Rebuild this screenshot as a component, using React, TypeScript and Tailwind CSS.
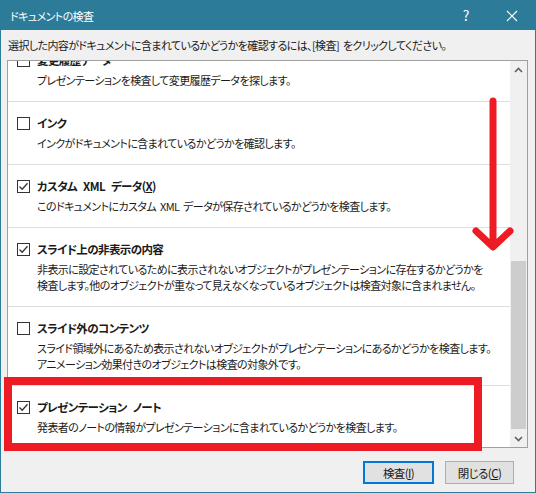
import React from 'react';

const FONT = "font-['Meiryo_UI','Noto_Sans_CJK_JP',sans-serif] [font-feature-settings:'palt'] [word-spacing:2px]";

type Item = { label: React.ReactNode; desc: string[]; checked: boolean };

const ITEMS: Item[] = [
  { label: '変更履歴データ', desc: ['プレゼンテーションを検査して変更履歴データを探します。'], checked: false },
  { label: 'インク', desc: ['インクがドキュメントに含まれているかどうかを確認します。'], checked: false },
  {
    label: (
      <>
        カスタム XML データ(<span className="underline">X</span>)
      </>
    ),
    desc: ['このドキュメントにカスタム XML データが保存されているかどうかを検査します。'],
    checked: true,
  },
  {
    label: 'スライド上の非表示の内容',
    desc: [
      '非表示に設定されているために表示されないオブジェクトがプレゼンテーションに存在するかどうかを',
      '検査します。他のオブジェクトが重なって見えなくなっているオブジェクトは検査対象に含まれません。',
    ],
    checked: true,
  },
  {
    label: 'スライド外のコンテンツ',
    desc: [
      'スライド領域外にあるため表示されないオブジェクトがプレゼンテーションにあるかどうかを検査します。',
      'アニメーション効果付きのオブジェクトは検査の対象外です。',
    ],
    checked: false,
  },
  { label: 'プレゼンテーション ノート', desc: ['発表者のノートの情報がプレゼンテーションに含まれているかどうかを検査します。'], checked: true },
];

function CheckBox({ checked }: { checked: boolean }) {
  return (
    <div className="w-[13px] h-[13px] border border-[#333333] bg-white flex items-center justify-center shrink-0">
      {checked && (
        <svg width="11" height="11" viewBox="0 0 11 11">
          <path d="M1.5 5.5 L4.2 8.2 L9.5 2.2" fill="none" stroke="#333333" strokeWidth="1.3" />
        </svg>
      )}
    </div>
  );
}

function Chevron({ up }: { up: boolean }) {
  return (
    <svg width="9" height="6" viewBox="0 0 9 6">
      <path d={up ? 'M1 5 L4.5 1.5 L8 5' : 'M1 1 L4.5 4.5 L8 1'} fill="none" stroke="#606060" strokeWidth="1.6" />
    </svg>
  );
}

export default function App() {
  return (
    <div className={`${FONT} relative w-[536px] h-[493px] border border-[#2b7b99] bg-[#f0f0f0] flex flex-col overflow-hidden text-[11px] tracking-[-0.6px] text-[#1a1a1a]`}>
      {/* Title bar */}
      <div className="h-[29px] bg-[#2b7b99] flex items-center pl-[9px] text-white shrink-0 text-[11px]">
        <span className="flex-1 leading-[16px]">ドキュメントの検査</span>
        <span className="w-[20px] text-center text-[14px] mr-[30px] tracking-normal">?</span>
        <svg width="12" height="12" viewBox="0 0 12 12" className="mr-[17px]">
          <path d="M1 1 L11 11 M11 1 L1 11" stroke="white" strokeWidth="1.2" />
        </svg>
      </div>

      {/* Instruction */}
      <div className="h-[30px] flex items-center pl-[7px] shrink-0 whitespace-nowrap">
        選択した内容がドキュメントに含まれているかどうかを確認するには、[検査] をクリックしてください。
      </div>

      {/* List panel */}
      <div className="ml-[6px] mr-[7px] h-[388px] border border-[#a0a0a0] bg-white flex shrink-0">
        <div className="flex-1 overflow-hidden">
          <div className="-mt-[22px]">
            {ITEMS.map((it, i) => (
              <div key={i} className={`pl-[9px] pt-[13px] pb-[13px] ${i > 0 ? 'border-t border-[#dedede]' : ''}`}>
                <div className="flex items-center h-[16px]">
                  <CheckBox checked={it.checked} />
                  <span className="ml-[7px] font-bold leading-[16px] text-[11.5px] tracking-[-0.6px] [word-spacing:4px]">{it.label}</span>
                </div>
                <div className="mt-[4px] pl-[20px] leading-[16px] whitespace-nowrap">
                  {it.desc.map((d, j) => (
                    <div key={j}>{d}</div>
                  ))}
                </div>
              </div>
            ))}
          </div>
        </div>
        {/* Scrollbar */}
        <div className="w-[17px] bg-[#f0f0f0] flex flex-col">
          <div className="h-[17px] flex items-center justify-center">
            <Chevron up />
          </div>
          <div className="flex-1 flex flex-col">
            <div className="h-[183px]" />
            <div className="h-[168px] mx-[1px] bg-[#cdcdcd]" />
          </div>
          <div className="h-[17px] flex items-center justify-center">
            <Chevron up={false} />
          </div>
        </div>
      </div>

      {/* Buttons */}
      <div className="flex justify-end gap-[11px] pr-[21px] pt-[13px]">
        <button className="w-[71px] h-[23px] bg-[#e1e1e1] border-2 border-[#0078d7] flex items-center justify-center leading-[16px] text-[11.5px]">
          <span>検査(<span className="underline">I</span>)</span>
        </button>
        <button className="w-[69px] h-[23px] bg-[#e1e1e1] border border-[#adadad] flex items-center justify-center leading-[16px] text-[11.5px]">
          <span>閉じる(<span className="underline">C</span>)</span>
        </button>
      </div>

      {/* Annotations */}
      <div className="absolute left-[3px] top-[376px] w-[478px] h-[74px] border-[8px] border-[#ed1c24]" />
      <svg className="absolute left-0 top-0 pointer-events-none" width="536" height="493" viewBox="1 1 536 493">
        <path d="M493 101 L493 244 M476 231 L493 247 L510 231" fill="none" stroke="#ed1c24" strokeWidth="7" strokeLinecap="round" strokeLinejoin="round" />
      </svg>
    </div>
  );
}
